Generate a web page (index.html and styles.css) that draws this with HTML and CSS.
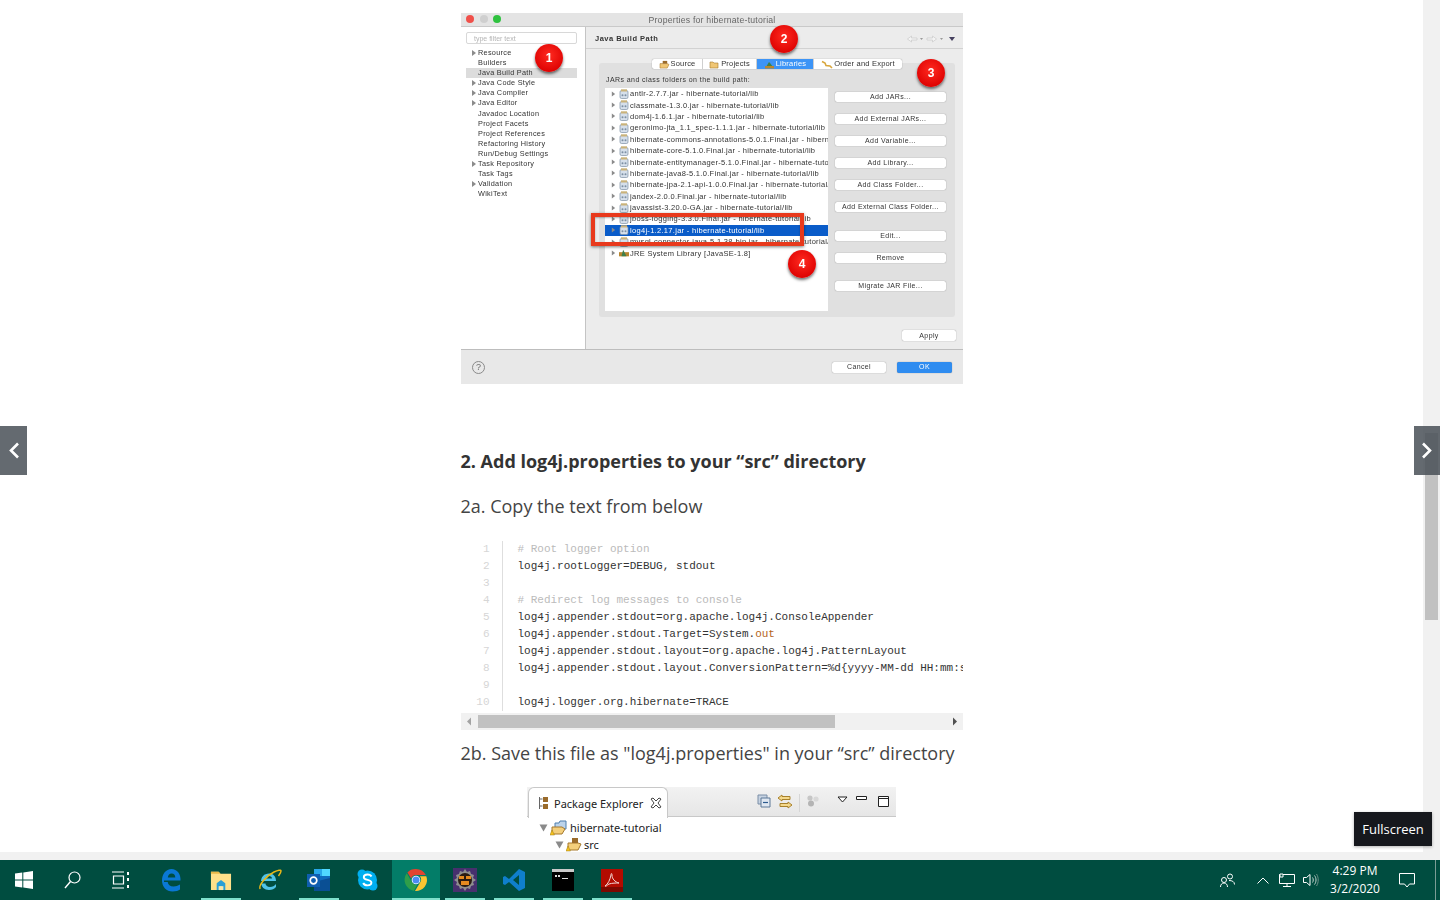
FILE: index.html
```html
<!DOCTYPE html>
<html lang="en">
<head>
  <meta charset="UTF-8" />
  <title>Add log4j.properties</title>
  <link rel="stylesheet" href="styles.css">
</head>
<body>

  <svg class="defs" aria-hidden="true">
    <symbol id="jar" viewBox="0 0 10 10">
      <rect x="1" y="1.500" width="8" height="8" rx="1.500" fill="#d5dfeb" stroke="#7d8fa3" stroke-width=".7"/>
      <rect x="2" y="0.300" width="6" height="2.200" fill="#c9b27a"/>
      <circle cx="3.500" cy="6.200" r="1" fill="#7d8fa3"/>
      <circle cx="6.500" cy="6.200" r="1" fill="#7d8fa3"/>
    </symbol>
    <symbol id="pkg" viewBox="0 0 12 10">
      <path d="M1 4h8l2 1-2 4H1z" fill="#f0c674" stroke="#a5792e" stroke-width=".6"/>
      <path d="M4 1h5v3H4z" fill="#9a6b2b"/>
    </symbol>
    <symbol id="arrow" viewBox="0 0 6 6">
      <path d="M1 0l4 3-4 3z" fill="#8b8b8b"/>
    </symbol>
  </svg>

  <div class="screen">
    <div class="viewport">
      <div class="page">
        <article class="post">

          <figure class="shot">
            <div class="dlg-title">
              <i class="light red"></i><i class="light grey"></i><i class="light green"></i>
              <span>Properties for hibernate-tutorial</span>
            </div>

            <div class="dlg-body">
              <aside class="prefs">
                <div class="filter">type filter text</div>
                <ul class="pref-list">
                  <li class="more">Resource</li>
                  <li>Builders</li>
                  <li class="selected">Java Build Path</li>
                  <li class="more">Java Code Style</li>
                  <li class="more">Java Compiler</li>
                  <li class="more">Java Editor</li>
                  <li>Javadoc Location</li>
                  <li>Project Facets</li>
                  <li>Project References</li>
                  <li>Refactoring History</li>
                  <li>Run/Debug Settings</li>
                  <li class="more">Task Repository</li>
                  <li>Task Tags</li>
                  <li class="more">Validation</li>
                  <li>WikiText</li>
                </ul>
              </aside>

              <section class="build-path">
                <header class="bp-head">
                  <h3>Java Build Path</h3>
                  <div class="bp-nav">
                    <svg width="48" height="8" viewBox="0 0 48 8">
                      <path d="M.5 4l4-3v2h5.500v2H4.500v2zM29.500 4l-4-3v2H20v2h5.500v2z" fill="#f4f4f4" stroke="#c4c4c4" stroke-width=".6"/>
                      <path d="M13 3h3l-1.500 2zM33 3h3l-1.500 2z" fill="#9a9a9a"/>
                      <path d="M42 2h6l-3 4z" fill="#45405e"/>
                    </svg>
                  </div>
                </header>

                <nav class="tabs">
                  <span class="tab tab-source"><svg width="11" height="9"><use href="#pkg"/></svg>Source</span>
                  <span class="tab tab-projects"><svg width="11" height="9" viewBox="0 0 11 9"><path d="M1 2h3l1 1h4v5H1z" fill="#f0c674" stroke="#a5792e" stroke-width=".6"/></svg>Projects</span>
                  <span class="tab tab-libs active">
                    <svg width="11" height="9" viewBox="0 0 11 9"><path d="M2 7l3-5 1 1 3 4z" fill="#3f7f4a"/><path d="M1 6h9v2.500H1z" fill="#b8862e"/></svg>Libraries</span>
                  <span class="tab tab-order">
                    <svg width="12" height="9" viewBox="0 0 12 9"><path d="M1 1.500l3 1.500 1 2.500 4 .5 2 2" fill="none" stroke="#d8a63c" stroke-width="1.600"/></svg>Order and Export</span>
                </nav>

                <div class="group">
                  <div class="group-label">JARs and class folders on the build path:</div>
                  <div class="group-main">
                    <ul class="jars">
                      <li><svg class="tw"><use href="#arrow"/></svg><svg class="ic"><use href="#jar"/></svg>antlr-2.7.7.jar - hibernate-tutorial/lib</li>
                      <li><svg class="tw"><use href="#arrow"/></svg><svg class="ic"><use href="#jar"/></svg>classmate-1.3.0.jar - hibernate-tutorial/lib</li>
                      <li><svg class="tw"><use href="#arrow"/></svg><svg class="ic"><use href="#jar"/></svg>dom4j-1.6.1.jar - hibernate-tutorial/lib</li>
                      <li><svg class="tw"><use href="#arrow"/></svg><svg class="ic"><use href="#jar"/></svg>geronimo-jta_1.1_spec-1.1.1.jar - hibernate-tutorial/lib</li>
                      <li><svg class="tw"><use href="#arrow"/></svg><svg class="ic"><use href="#jar"/></svg>hibernate-commons-annotations-5.0.1.Final.jar - hibernate-tutorial/lib</li>
                      <li><svg class="tw"><use href="#arrow"/></svg><svg class="ic"><use href="#jar"/></svg>hibernate-core-5.1.0.Final.jar - hibernate-tutorial/lib</li>
                      <li><svg class="tw"><use href="#arrow"/></svg><svg class="ic"><use href="#jar"/></svg>hibernate-entitymanager-5.1.0.Final.jar - hibernate-tutorial/lib</li>
                      <li><svg class="tw"><use href="#arrow"/></svg><svg class="ic"><use href="#jar"/></svg>hibernate-java8-5.1.0.Final.jar - hibernate-tutorial/lib</li>
                      <li><svg class="tw"><use href="#arrow"/></svg><svg class="ic"><use href="#jar"/></svg>hibernate-jpa-2.1-api-1.0.0.Final.jar - hibernate-tutorial/lib</li>
                      <li><svg class="tw"><use href="#arrow"/></svg><svg class="ic"><use href="#jar"/></svg>jandex-2.0.0.Final.jar - hibernate-tutorial/lib</li>
                      <li><svg class="tw"><use href="#arrow"/></svg><svg class="ic"><use href="#jar"/></svg>javassist-3.20.0-GA.jar - hibernate-tutorial/lib</li>
                      <li><svg class="tw"><use href="#arrow"/></svg><svg class="ic"><use href="#jar"/></svg>jboss-logging-3.3.0.Final.jar - hibernate-tutorial/lib</li>
                      <li class="selected"><svg class="tw"><use href="#arrow"/></svg><svg class="ic"><use href="#jar"/></svg>log4j-1.2.17.jar - hibernate-tutorial/lib</li>
                      <li><svg class="tw"><use href="#arrow"/></svg><svg class="ic"><use href="#jar"/></svg>mysql-connector-java-5.1.38-bin.jar - hibernate-tutorial/lib</li>
                      <li><svg class="tw"><use href="#arrow"/></svg><svg class="ic" viewBox="0 0 12 10"><path d="M0 4h12v5H0z" fill="#b8862e"/><path d="M5 1l4 8H3z" fill="#3f7f4a"/></svg>JRE System Library [JavaSE-1.8]</li>
                    </ul>
                    <div class="side-btns">
                      <button>Add JARs...</button>
                      <button>Add External JARs...</button>
                      <button>Add Variable...</button>
                      <button>Add Library...</button>
                      <button>Add Class Folder...</button>
                      <button>Add External Class Folder...</button>
                      <button class="after-gap">Edit...</button>
                      <button>Remove</button>
                      <button class="after-gap2">Migrate JAR File...</button>
                    </div>
                  </div>
                </div>

                <div class="apply-row"><button>Apply</button></div>
              </section>
            </div>

            <footer class="dlg-foot">
              <span class="help">?</span>
              <button>Cancel</button>
              <button class="ok">OK</button>
            </footer>

            <span class="pin pin-1">1</span>
            <span class="pin pin-2">2</span>
            <span class="pin pin-3">3</span>
            <span class="pin pin-4">4</span>
            <div class="red-box"></div>
          </figure>

          <h2>2. Add log4j.properties to your “src” directory</h2>
          <p class="step step-a">2a. Copy the text from below</p>

          <div class="code">
            <div class="code-scroll">
              <ol class="gutter">
                <li>1</li><li>2</li><li>3</li><li>4</li><li>5</li><li>6</li><li>7</li><li>8</li><li>9</li><li>10</li>
              </ol>
              <pre class="lines"><span class="cm"># Root logger option</span>
log4j.rootLogger=DEBUG, stdout

<span class="cm"># Redirect log messages to console</span>
log4j.appender.stdout=org.apache.log4j.ConsoleAppender
log4j.appender.stdout.Target=System.<span class="kw">out</span>
log4j.appender.stdout.layout=org.apache.log4j.PatternLayout
log4j.appender.stdout.layout.ConversionPattern=%d{yyyy-MM-dd HH:mm:ss} %-5p %c{1}:%L - %m%n

log4j.logger.org.hibernate=TRACE</pre>
            </div>
            <div class="code-bar">
              <svg width="17" height="13" viewBox="0 0 17 13"><path d="M6 6.500l4-4v8z" fill="#a3a3a3"/></svg>
              <div class="code-track"><div class="code-thumb"></div></div>
              <svg width="17" height="13" viewBox="0 0 17 13"><path d="M11 6.500l-4-4v8z" fill="#505050"/></svg>
            </div>
          </div>

          <p class="step step-b">2b. Save this file as "log4j.properties" in your “src” directory</p>

          <figure class="explorer">
            <div class="ex-bar">
              <div class="ex-tab">
                <svg width="14" height="14" viewBox="0 0 14 14"><path d="M3.500 1v12M3.500 3h3M3.500 10h3" stroke="#666" fill="none"/><path d="M7 1h5v5H7zM7 8h5v5H7z" fill="#9a6b2b"/></svg>
                <span>Package Explorer</span>
                <svg width="12" height="12" viewBox="0 0 12 12"><path d="M1 2l2-1 3 3 3-3 2 1-3 4 3 4-2 1-3-3-3 3-2-1 3-4z" fill="none" stroke="#444"/></svg>
              </div>
              <div class="ex-tools">
                <svg width="14" height="14" viewBox="0 0 14 14"><path d="M1 1h9v9H1z" fill="#c7d3e2" stroke="#7b8ea6"/><path d="M4 4h9v9H4z" fill="#dfe7f1" stroke="#5d7898"/><path d="M6 8.500h5" stroke="#2b5a8e" stroke-width="1.200"/></svg>
                <svg width="16" height="15" viewBox="0 0 16 15"><path d="M5 1L1 4l4 3V5.500h8v-3H5zM11 8l4 3-4 3v-1.500H3v-3h8z" fill="#f5d98b" stroke="#a8812c"/></svg>
                <i class="ex-sep"></i>
                <svg class="ex-dim" width="14" height="13" viewBox="0 0 14 13"><circle cx="4" cy="4" r="2.600" fill="#c6c6c6"/><circle cx="10" cy="5" r="2.600" fill="#d8d8d8"/><circle cx="5" cy="9.500" r="3" fill="#b4b4b4"/></svg>
                <svg class="ex-menu" width="11" height="7" viewBox="0 0 11 7"><path d="M1 1h9L5.500 6z" fill="#fff" stroke="#222"/></svg>
                <svg class="ex-min" width="11" height="5" viewBox="0 0 11 5"><path d="M.5.500h10v3H.5z" fill="#fff" stroke="#222"/></svg>
                <svg class="ex-max" width="11" height="11" viewBox="0 0 11 11"><path d="M.5.500h10v10H.5z" fill="#fff" stroke="#222"/><path d="M.5 2.500h10" stroke="#222"/></svg>
              </div>
            </div>
            <ul class="ex-tree">
              <li class="ex-root">
                <svg width="9" height="8" viewBox="0 0 9 8"><path d="M.5.500h8L4.500 7.500z" fill="#8a8a8a"/></svg>
                <svg width="18" height="17" viewBox="0 0 18 17"><path d="M5 4h4l1-2h6v8H5z" fill="#bcd3ea" stroke="#4e7eae"/><path d="M2 8h10l3 2-3 5H2z" fill="#f4cf7c" stroke="#a5792e"/><path d="M2 11l2.500 5H0z" fill="#f6c21c" stroke="#9d7a15" stroke-width=".5"/></svg>
                <span>hibernate-tutorial</span>
              </li>
              <li class="ex-src">
                <svg width="9" height="8" viewBox="0 0 9 8"><path d="M.5.500h8L4.500 7.500z" fill="#8a8a8a"/></svg>
                <svg width="16" height="15" viewBox="0 0 16 15"><path d="M2 6h10l3 1-3 6H2z" fill="#f4cf7c" stroke="#a5792e"/><path d="M6 1h6v5H6z" fill="#9a6b2b"/><path d="M2 9l2.500 5H0z" fill="#f6c21c" stroke="#9d7a15" stroke-width=".5"/></svg>
                <span>src</span>
              </li>
            </ul>
          </figure>

        </article>
      </div>
      <div class="hscroll"></div>
    </div>
    <div class="vscroll"><div class="vthumb"></div></div>

    <button class="slide-btn prev" aria-label="Previous">
      <svg width="12" height="17" viewBox="0 0 12 17"><path d="M10 1.500L3 8.500l7 7" fill="none" stroke="#fff" stroke-width="2.600"/></svg>
    </button>
    <button class="slide-btn next" aria-label="Next">
      <svg width="12" height="17" viewBox="0 0 12 17"><path d="M2 1.500l7 7-7 7" fill="none" stroke="#fff" stroke-width="2.600"/></svg>
    </button>
    <div class="fullscreen">Fullscreen</div>
  </div>

  <div class="taskbar">
    <div class="task-left">
      <span class="tb-cell sys"><svg width="18" height="18" viewBox="0 0 18 18"><path d="M0 2.600l7.300-1v7H0zM8.300 1.400L18 0v8.600H8.300zM0 9.500h7.300v7L0 15.400zM8.300 9.500H18V18l-9.700-1.400z" fill="#fff"/></svg></span>
      <span class="tb-cell sys"><svg width="17" height="18" viewBox="0 0 17 18"><circle cx="10.500" cy="6.500" r="5.500" fill="none" stroke="#fff" stroke-width="1.200"/><path d="M6.500 10.500L1 17" stroke="#fff" stroke-width="1.400"/></svg></span>
      <span class="tb-cell sys"><svg width="17" height="18" viewBox="0 0 17 18"><path d="M0 1h12M0 17h12M1.500 5h10v8h-10z" fill="none" stroke="#fff" stroke-width="1.200"/><path d="M15 1h2v3h-2zM15 7h2v3h-2zM15 14h2v3h-2z" fill="#fff"/></svg></span>

      <span class="tb-cell first"><svg width="22" height="24" viewBox="0 0 22 24"><path d="M3 12.500h16.500C20 6 16 1 10.500 1 5 1 1 6 1 12.500 1 19 5.500 23.500 11.500 23.500c3.500 0 6-1 7.500-2v-5c-2 1.300-4 2-6.500 2-3.500 0-5.500-2-5.800-4.500H3z" fill="#0a78d4"/><path d="M6.800 9.500h7.500c0-2.500-1.500-4-3.700-4-2 0-3.400 1.600-3.800 4z" fill="#004d40"/></svg></span>
      <span class="tb-cell run"><svg width="22" height="22" viewBox="0 0 23 23"><path d="M1 3h8l2 2h11v17H1z" fill="#ffe08a"/><path d="M1 3h8l2 2H1z" fill="#e9b949"/><path d="M7 22v-7l4.500-3.500L16 15v7h-3v-4h-3v4z" fill="#2a9fd6"/><path d="M9 22v-4h5v4z" fill="#f6e7b0"/></svg></span>
      <span class="tb-cell"><svg width="24" height="24" viewBox="0 0 24 24"><path d="M3 13h15C18 8 15 5.500 11 5.500 6 5.500 3 9 3 14c0 5 3.500 8 8 8 3 0 5.500-1 7-3v-3c-1.500 2-3.500 3-6 3-3 0-4.500-2-4.500-3.500H3z" fill="#4fc3e8"/><path d="M7.500 10.500h6.500c0-1.500-1.200-2.600-3.200-2.600-1.700 0-3 1-3.300 2.600z" fill="#004d40"/><path d="M2 21C.5 17 8 8 16 4c4-2 7-2.500 7-1 0 1-1 3-2.500 5" fill="none" stroke="#e8b818" stroke-width="1.500"/></svg></span>
      <span class="tb-cell run"><svg width="25" height="24" viewBox="0 0 25 24"><path d="M8 1h16v20H8z" fill="#0f6cbd"/><path d="M8 1h8v7H8z" fill="#28a8ea"/><path d="M16 1h8v7h-8z" fill="#50d9ff"/><path d="M8 14l16-4v13H8z" fill="#0a4f94"/><path d="M1 6h13v13H1z" fill="#0f5eb0"/><circle cx="7.500" cy="12.500" r="3.300" fill="none" stroke="#fff" stroke-width="1.700"/></svg></span>
      <span class="tb-cell"><svg width="23" height="24" viewBox="0 0 23 24"><circle cx="11.500" cy="12" r="9.500" fill="#00aff0"/><circle cx="6" cy="6" r="4.500" fill="#00aff0"/><circle cx="17" cy="18" r="4.500" fill="#00aff0"/><path d="M15.500 8.500C14.800 7 13.200 6.500 11.500 6.500 9.500 6.500 7.800 7.500 7.800 9.200c0 3.500 7.600 2 7.600 5.400 0 1.700-1.800 2.800-3.900 2.800-2 0-3.600-.8-4.300-2.400" fill="none" stroke="#fff" stroke-width="1.900"/></svg></span>
      <span class="tb-cell active"><svg width="24" height="24" viewBox="0 0 24 24"><path d="M12 1a11 11 0 0 1 9.800 6H12a5 5 0 0 0-4.800 3.500L3.400 4.400A11 11 0 0 1 12 1z" fill="#e2432f"/><path d="M2.800 5.300l5 8.700a5 5 0 0 0 5.400 2.800l-3.300 6A11 11 0 0 1 2.800 5.300z" fill="#2f9e4a"/><path d="M22.300 8.200A11 11 0 0 1 11 23l5.200-8.800A5 5 0 0 0 15.800 8.200z" fill="#fbc531"/><circle cx="12" cy="12" r="4.300" fill="#fff"/><circle cx="12" cy="12" r="3.500" fill="#4c8bf5"/></svg></span>
      <span class="tb-cell run"><svg width="24" height="24" viewBox="0 0 24 24"><path d="M0 0h24v24H0z" fill="#47306e"/><path d="M12 1l2 3 3-1 1 3 3 1-1 3 3 2-3 2 1 3-3 1-1 3-3-1-2 3-2-3-3 1-1-3-3-1 1-3-3-2 3-2-1-3 3-1 1-3 3 1z" fill="#8f8f8f"/><circle cx="12" cy="12" r="7" fill="#2a1c12"/><path d="M6 8h5v3H6zM13 8h5v3h-5zM8 13h8v4H8z" fill="#e58a1f"/></svg></span>
      <span class="tb-cell run"><svg width="24" height="24" viewBox="0 0 24 24"><path d="M17 1l6 3v16l-6 3-10-9-4 3-2-1V9l2-1 4 3zM17 7l-6 5 6 5z" fill="#0f7fcc"/></svg></span>
      <span class="tb-cell run"><svg width="22" height="22" viewBox="0 0 22 22"><path d="M0 0h22v22H0z" fill="#000"/><path d="M0 0h22v3H0z" fill="#c9c9c9"/><path d="M3 6h2v2H3zM6 6h2v2H6zM10 9h6v1h-6z" fill="#ddd"/></svg></span>
      <span class="tb-cell run"><svg width="22" height="23" viewBox="0 0 22 23"><path d="M0 0h22v23H0z" fill="#b30b00"/><path d="M0 18h22v5H0z" fill="#7d0800"/><path d="M4 17c3-2 5-6 6-11 0-2 1-2 1 0 0 4 3 7 7 8-3 0-7 0-10 1-2 1-3 3-4 2z" fill="none" stroke="#f4d6d3" stroke-width="1"/></svg></span>
    </div>

    <div class="task-right">
      <svg class="tray-people" width="15" height="15" viewBox="0 0 15 15"><circle cx="10" cy="3.500" r="2.500" fill="none" stroke="#fff"/><circle cx="4" cy="7" r="2.500" fill="none" stroke="#fff"/><path d="M.5 14c0-2.500 1.500-4 3.500-4s3.500 1.500 3.500 4M9 7.500c3 0 5.500 1 5.500 4" fill="none" stroke="#fff"/></svg>
      <svg class="tray-up" width="12" height="7" viewBox="0 0 12 7"><path d="M.5 6.500L6 1l5.500 5.500" fill="none" stroke="#fff"/></svg>
      <svg class="tray-net" width="16" height="14" viewBox="0 0 16 14"><path d="M.5 1.500h15v9H.5zM8 10.500v3M4 13.500h8" fill="none" stroke="#fff"/><path d="M1 1h3v3H1z" fill="#004d40" stroke="#fff"/></svg>
      <svg class="tray-vol" width="16" height="14" viewBox="0 0 16 14"><path d="M.5 4.500h3L7 1.500v11l-3.500-3h-3z" fill="none" stroke="#fff"/><path d="M9.500 4.500c1 1.500 1 3.500 0 5M11.500 2.500c2 2.500 2 6.500 0 9" fill="none" stroke="#c7d4d0"/><path d="M13.500 1c2.300 3.500 2.300 8.500 0 12" fill="none" stroke="#6d8f88"/></svg>
      <div class="clock"><span>4:29 PM</span><span>3/2/2020</span></div>
      <svg class="tray-note" width="16" height="15" viewBox="0 0 16 15"><path d="M.5.500h15v10.500h-5L8 14 5.500 11h-5z" fill="none" stroke="#fff"/></svg>
      <i class="show-desktop"></i>
    </div>
  </div>

</body>
</html>
```

FILE: styles.css
```css
:root {
  --taskbar: #004d40;
  --track: #f1f1f1;
  --thumb: #c1c1c1;
  --dlg: #ececec;
  --dlg-group: #e0e0e0;
  --blue: #0a5cc9;
  --run: #7fe0cc;
}

* {
  box-sizing: border-box;
  margin: 0;
  padding: 0;
}

html, body {
  height: 900px;
  overflow: hidden;
}

body {
  font-family: 'Open Sans', sans-serif;
  color: #333;
  background: #fff;
  display: flex;
  flex-direction: column;
}

ul, ol {
  list-style: none;
}

.defs {
  width: 0;
  height: 0;
  display: block;
}

/* window area */

.screen {
  position: relative;
  height: 860px;
  display: flex;
}

.viewport {
  flex: 1;
  display: flex;
  flex-direction: column;
  min-width: 0;
}

.page {
  height: 852px;
  overflow: hidden;
  background: #fff;
}

.hscroll {
  height: 8px;
  background: var(--track);
}

.vscroll {
  width: 17px;
  background: var(--track);
  padding: 433px 2px 0;
}

.vthumb {
  height: 187px;
  background: var(--thumb);
}

.slide-btn {
  position: absolute;
  top: 426px;
  height: 49px;
  border: none;
  display: flex;
  align-items: center;
  justify-content: center;
  background: rgba(73, 80, 87, 0.85);
}

.prev {
  left: 0;
  width: 27px;
}

.next {
  right: 0;
  width: 26px;
}

.fullscreen {
  position: absolute;
  left: 1354px;
  top: 812px;
  width: 78px;
  height: 34px;
  background: #16181d;
  color: #fff;
  font-size: 13px;
  font-weight: 400;
  line-height: 34px;
  text-align: center;
  box-shadow: 0 1px 3px rgba(0, 0, 0, 0.3);
}

/* article */

.post {
  width: 502px;
  margin: 0 auto;
  padding-top: 13px;
}

h2 {
  font-size: 18px;
  font-weight: 700;
  line-height: 24px;
  color: #333;
  margin-top: 65px;
}

.step {
  font-size: 18px;
  line-height: 24px;
  color: #444;
}

.step-a {
  margin-top: 21px;
}

.step-b {
  margin-top: 11px;
}

/* code block */

.code {
  margin-top: 23px;
}

.code-scroll {
  display: flex;
  height: 172px;
  overflow: hidden;
  font-family: 'Liberation Mono', monospace;
  font-size: 11px;
  line-height: 17px;
}

.gutter {
  width: 42px;
  flex: none;
  height: 170px;
  border-right: 1px solid #dedede;
  padding-right: 12px;
  text-align: right;
  color: #d6d6d6;
}

.lines {
  margin-left: 15px;
  font: inherit;
  color: #333;
  white-space: pre;
}

.cm {
  color: #bbb;
}

.kw {
  color: #b5651d;
}

.code-bar {
  height: 17px;
  background: var(--track);
  display: flex;
  align-items: center;
  justify-content: space-between;
}

.code-track {
  flex: 1;
  height: 13px;
}

.code-thumb {
  width: 357px;
  height: 13px;
  background: var(--thumb);
}

/* eclipse dialog picture */

.shot {
  position: relative;
  width: 502px;
  height: 371px;
  margin-left: 0.5px;
  display: flex;
  flex-direction: column;
  background: var(--dlg);
  font-family: 'Liberation Sans', sans-serif;
  font-size: 7px;
  color: #333;
  filter: blur(0.3px);
}

.dlg-title {
  position: relative;
  height: 14px;
  flex: none;
  display: flex;
  align-items: center;
  justify-content: center;
  background: #e4e4e4;
  border-bottom: 1px solid #c9c9c9;
  font-size: 8.7px;
  color: #666;
}

.dlg-title span {
  letter-spacing: 0.22px;
}

.light {
  position: absolute;
  top: 2px;
  width: 8px;
  height: 8px;
  border-radius: 50%;
}

.red { left: 5px; background: #f0504a; }
.grey { left: 19px; background: #cfcfcf; }
.green { left: 32px; background: #2fc23f; }

.dlg-body {
  flex: 1;
  display: flex;
  border-bottom: 1px solid #bdbdbd;
  min-height: 0;
}

.prefs {
  width: 125px;
  flex: none;
  background: #fff;
  border-right: 1px solid #c4c4c4;
  padding: 5px 8px 0 5px;
}

.filter {
  height: 12px;
  line-height: 11px;
  border: 1px solid #d8d8d8;
  border-radius: 2px;
  padding-left: 7px;
  color: #b5b5b5;
}

.pref-list {
  margin-top: 4px;
}

.pref-list li {
  height: 10.1px;
  line-height: 10px;
  padding-left: 12px;
  position: relative;
  font-size: 7.3px;
  letter-spacing: 0.28px;
}

.pref-list li.more::before {
  content: "";
  position: absolute;
  left: 6px;
  top: 2px;
  border-left: 4px solid #8b8b8b;
  border-top: 3px solid transparent;
  border-bottom: 3px solid transparent;
}

.pref-list li.selected {
  background: #dcdcdc;
}

.build-path {
  flex: 1;
  min-width: 0;
  display: flex;
  flex-direction: column;
}

.bp-head {
  height: 22px;
  flex: none;
  display: flex;
  align-items: center;
  justify-content: space-between;
  padding: 2px 8px 0 9px;
  border-bottom: 1px solid #d2d2d2;
}

.bp-head h3 {
  font-size: 7.5px;
  font-weight: 700;
  letter-spacing: 0.5px;
}

.bp-nav {
  display: flex;
  align-items: center;
}

.tabs {
  position: relative;
  z-index: 1;
  display: flex;
  height: 10px;
  width: 250px;
  margin: 10px 0 -6px 66px;
  background: #fff;
  border-radius: 2px;
  box-shadow: 0 0 1px rgba(0, 0, 0, 0.5);
}

.tab {
  display: flex;
  align-items: center;
  justify-content: center;
  gap: 1px;
  line-height: 10px;
  white-space: nowrap;
  font-size: 7.5px;
  letter-spacing: 0.2px;
  border-right: 1px solid #cfcfcf;
}

.tab-source { width: 51px; }
.tab-projects { width: 54px; }
.tab-libs { width: 57px; }
.tab-order { width: 88px; border-right: none; }

.tab.active {
  background: #3d94f6;
  color: #fff;
}

.group {
  margin: 0 8px 0 13px;
  height: 254px;
  flex: none;
  background: var(--dlg-group);
  border-radius: 3px;
  padding: 12px 9px 6px 6px;
  display: flex;
  flex-direction: column;
}

.group-label {
  height: 13px;
  line-height: 9px;
  padding-left: 1px;
  letter-spacing: 0.42px;
}

.group-main {
  flex: 1;
  display: flex;
  min-height: 0;
  gap: 7px;
}

.jars {
  width: 223px;
  flex: none;
  background: #fff;
  overflow: hidden;
  border: none;
}

.jars li {
  height: 11.4px;
  display: flex;
  align-items: center;
  white-space: nowrap;
  line-height: 11px;
  padding-left: 6px;
  font-size: 7.5px;
  letter-spacing: 0.3px;
}

.jars li.selected {
  background: var(--blue);
  color: #fff;
}

.tw {
  width: 5px;
  height: 6px;
  flex: none;
}

.ic {
  width: 10px;
  height: 10px;
  flex: none;
  margin: 0 1px 0 3px;
}

.side-btns {
  flex: 1;
  display: flex;
  flex-direction: column;
  gap: 12px;
  padding-top: 4px;
}

.shot button {
  font-family: inherit;
  font-size: 7px;
  color: #333;
  border: none;
  background: #fff;
  border-radius: 2px;
  box-shadow: 0 0 1px rgba(0, 0, 0, 0.5);
  line-height: 10px;
  letter-spacing: 0.36px;
}

.side-btns button {
  height: 10px;
  flex: none;
}

.side-btns .after-gap {
  margin-top: 7px;
}

.side-btns .after-gap2 {
  margin-top: 6px;
}

.apply-row {
  display: flex;
  justify-content: flex-end;
  padding: 13px 7px 0 0;
}

.apply-row button {
  width: 54px;
  height: 11px;
}

.dlg-foot {
  height: 34px;
  flex: none;
  display: flex;
  align-items: center;
  background: #e8e8e8;
  padding: 0 11px 0 11px;
}

.help {
  width: 13px;
  height: 13px;
  border: 1px solid #8a8a8a;
  border-radius: 50%;
  text-align: center;
  line-height: 11px;
  font-size: 9px;
  color: #6d6d6d;
  margin-right: auto;
}

.dlg-foot button {
  width: 54px;
  height: 11px;
  margin-left: 11px;
}

.shot .dlg-foot .ok {
  width: 55px;
  background: #2f8cf0;
  color: #fff;
}

.pin {
  position: absolute;
  width: 28px;
  height: 28px;
  border-radius: 50%;
  background: radial-gradient(circle at 50% 40%, #ff2a20, #dc0000 80%);
  box-shadow: 0 2px 3px rgba(0, 0, 0, 0.55);
  color: #fff;
  font-size: 12px;
  font-weight: 700;
  line-height: 28px;
  text-align: center;
}

.pin-1 { left: 74px; top: 31px; }
.pin-2 { left: 309px; top: 12px; }
.pin-3 { left: 456px; top: 46px; }
.pin-4 { left: 327px; top: 237px; }

.red-box {
  position: absolute;
  left: 130px;
  top: 200px;
  width: 213px;
  height: 33px;
  border: 4px solid #e8391c;
  box-shadow: 0 1px 3px rgba(0, 0, 0, 0.5), inset 0 1px 2px rgba(0, 0, 0, 0.3);
}

/* package explorer picture */

.explorer {
  width: 369px;
  margin: 22px auto 0;
  font-family: 'Noto Sans', sans-serif;
  font-size: 11px;
  color: #222;
}

.ex-bar {
  height: 30px;
  display: flex;
  background: linear-gradient(#f2f2f2, #e6e6e6);
  border-bottom: 1px solid #c8c8c8;
  padding-left: 1px;
}

.ex-tab {
  width: 140px;
  height: 31px;
  background: #fff;
  border: 1px solid #c8c8c8;
  border-bottom: none;
  border-radius: 6px 6px 0 0;
  display: flex;
  align-items: center;
  gap: 4px;
  padding-left: 7px;
}

.ex-tab span {
  width: 92px;
  white-space: nowrap;
}

.ex-tools {
  flex: 1;
  display: flex;
  align-items: flex-start;
  padding: 7px 0 0 89px;
  gap: 6px;
}

.ex-sep {
  width: 1px;
  height: 18px;
  background: #d6d6d6;
}

.ex-menu { margin: 2px 0 0 11px; }
.ex-min { margin: 2px 0 0 2px; }
.ex-max { margin: 2px 0 0 5px; }

.ex-tree {
  height: 34px;
  padding-top: 2px;
}

.ex-tree li {
  height: 17px;
  display: flex;
  align-items: center;
}

.ex-root {
  padding-left: 12px;
  gap: 2px;
}

.ex-src {
  padding-left: 28px;
  gap: 2px;
}

/* windows taskbar */

.taskbar {
  height: 40px;
  flex: none;
  background: var(--taskbar);
  display: flex;
  justify-content: space-between;
  align-items: stretch;
  color: #fff;
}

.task-left {
  display: flex;
}

.tb-cell {
  width: 49px;
  display: flex;
  align-items: center;
  justify-content: center;
  flex: none;
}

.tb-cell.sys {
  width: 48px;
}

.tb-cell.first {
  margin-left: 3px;
}

.tb-cell.run {
  background: linear-gradient(var(--run), var(--run)) no-repeat center bottom / 40px 2px;
}

.tb-cell.active {
  width: 48px;
  background: #037d68 linear-gradient(var(--run), var(--run)) no-repeat center bottom / 100% 2px;
}

.task-right {
  display: flex;
  align-items: center;
}

.tray-up { margin-left: 22px; }
.tray-net { margin-left: 10px; }
.tray-vol { margin-left: 8px; }

.clock {
  width: 72px;
  display: flex;
  flex-direction: column;
  align-items: center;
  font-size: 12px;
  line-height: 18px;
}

.tray-note {
  margin-left: 8px;
}

.show-desktop {
  width: 1px;
  height: 40px;
  margin-left: 20px;
  margin-right: 4px;
  background: #7a9c95;
}
```
